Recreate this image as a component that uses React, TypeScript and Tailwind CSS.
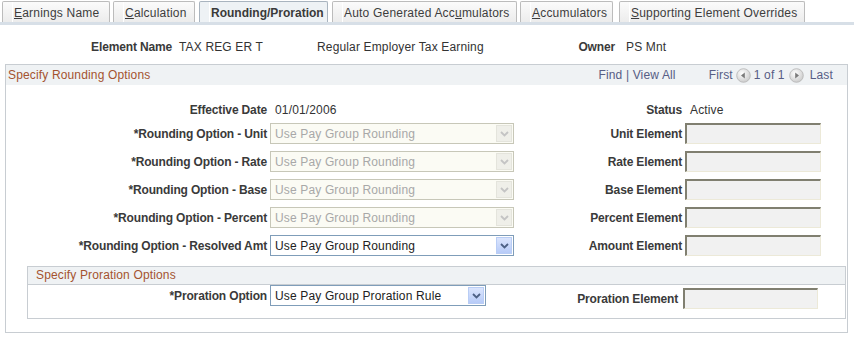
import React from "react";

const font = { fontFamily: '"Liberation Sans", Arial, sans-serif' };

type Tab = { label: string; hot?: number; width: number; gap: number; active?: boolean };

const tabs: Tab[] = [
  { label: "Earnings Name", hot: 0, width: 108, gap: 2 },
  { label: "Calculation", hot: 0, width: 82, gap: 3 },
  { label: "Rounding/Proration", width: 129, gap: 4, active: true },
  { label: "Auto Generated Accumulators", hot: 18, width: 185, gap: 4 },
  { label: "Accumulators", hot: 0, width: 93, gap: 3 },
  { label: "Supporting Element Overrides", hot: 0, width: 186, gap: 6 },
];

function TabLabel({ t }: { t: Tab }) {
  if (t.hot === undefined) return <>{t.label}</>;
  return (
    <>
      {t.label.slice(0, t.hot)}
      <span className="underline">{t.label[t.hot]}</span>
      {t.label.slice(t.hot + 1)}
    </>
  );
}

function Chevron({ color }: { color: string }) {
  return (
    <svg width="9" height="6" viewBox="0 0 9 6">
      <path d="M1 1 L4.5 4.5 L8 1" fill="none" stroke={color} strokeWidth="1.8" />
    </svg>
  );
}

function Select({ text, width, disabled }: { text: string; width: number; disabled?: boolean }) {
  if (disabled) {
    return (
      <div
        className="flex h-[21px] items-center border border-[#c7c7b8] bg-[#fbfbf4] pl-[4px] pr-[1px] tracking-[0.15px] text-[#a8a8a8]"
        style={{ width }}
      >
        <span className="flex-1 leading-none">{text}</span>
        <div className="flex h-[17px] w-[16px] items-center justify-center border border-[#e4e4dc] bg-[#efefe9]">
          <Chevron color="#c4c4c4" />
        </div>
      </div>
    );
  }
  return (
    <div
      className="flex h-[21px] items-center border border-[#7f9db9] bg-white pl-[4px] pr-[1px] tracking-[0.15px] text-[#222]"
      style={{ width }}
    >
      <span className="flex-1 leading-none">{text}</span>
      <div className="flex h-[17px] w-[16px] items-center justify-center border border-[#b9cdf5] bg-gradient-to-b from-[#dbe5fd] to-[#b7cbf8]">
        <Chevron color="#4d6185" />
      </div>
    </div>
  );
}

function Input({ width }: { width: number }) {
  return (
    <div
      className="h-[21px] border-t-2 border-l-2 border-r border-b border-t-[#807f70] border-l-[#807f70] border-r-[#ece9d8] border-b-[#ece9d8] bg-[#f1f1f1]"
      style={{ width }}
    />
  );
}

function NavIcon({ dir }: { dir: "left" | "right" }) {
  return (
    <svg width="15" height="15" viewBox="0 0 15 15">
      <defs>
        <radialGradient id={`g${dir}`} cx="40%" cy="35%" r="70%">
          <stop offset="0%" stopColor="#ffffff" />
          <stop offset="100%" stopColor="#c9c9c9" />
        </radialGradient>
      </defs>
      <circle cx="7.5" cy="7.5" r="6.8" fill={`url(#g${dir})`} stroke="#b4b4b4" strokeWidth="0.8" />
      {dir === "left" ? (
        <path d="M5 7.5 L8.8 4.6 L8.8 10.4 Z" fill="#7a7a7a" />
      ) : (
        <path d="M10 7.5 L6.2 4.6 L6.2 10.4 Z" fill="#7a7a7a" />
      )}
    </svg>
  );
}

const rows = [
  { label: "*Rounding Option - Unit", right: "Unit Element", disabled: true },
  { label: "*Rounding Option - Rate", right: "Rate Element", disabled: true },
  { label: "*Rounding Option - Base", right: "Base Element", disabled: true },
  { label: "*Rounding Option - Percent", right: "Percent Element", disabled: true },
  { label: "*Rounding Option - Resolved Amt", right: "Amount Element", disabled: false },
];

const lbl = "text-right font-bold tracking-[-0.15px] text-[#3a3a3a]";
const val = "tracking-[0.15px]";

export default function App() {
  return (
    <div className="h-[337px] w-[854px] overflow-hidden bg-white text-[12px] text-[#333]" style={font}>
      {/* tab strip */}
      <div className="flex h-[22px] items-end pt-[1px]">
        {tabs.map((t) => (
          <div
            key={t.label}
            className={
              "flex h-[21px] items-center rounded-t-[2px] border border-b-0 pl-[9px] " +
              (t.active
                ? "border-[#a9b4bf] bg-[#eef2f5] font-bold text-[#3a3a3a]"
                : "border-[#bcbcbc] bg-gradient-to-b from-[#fbfbfb] to-[#ececec] tracking-[0.2px] text-[#3d3d3d]")
            }
            style={{ width: t.width, marginLeft: t.gap }}
          >
            <div className="flex h-full w-full items-center border-l border-white pt-[2px]">
              <span className="pl-[1px] leading-none">
                <TabLabel t={t} />
              </span>
            </div>
          </div>
        ))}
      </div>
      <div className="h-[3px] w-full bg-[#d7dfe7]" />

      {/* element header */}
      <div className="mt-[14px] flex h-[16px] items-center">
        <div className={"w-[172px] " + lbl}>Element Name</div>
        <div className={"ml-[7px] w-[138px] " + val}>TAX REG ER T</div>
        <div className={"w-[233px] " + val}>Regular Employer Tax Earning</div>
        <div className={"w-[65px] " + lbl}>Owner</div>
        <div className={"ml-[11px] " + val}>PS Mnt</div>
      </div>

      {/* rounding group */}
      <div className="ml-[5px] mt-[9px] h-[269px] w-[843px] border border-[#c8cdd2]">
        <div className="flex h-[20px] items-center bg-[#eff2f4] pl-[2px] pr-[14px] tracking-[0.15px]">
          <span className="text-[#a4532f]">Specify Rounding Options</span>
          <div className="flex-1" />
          <span className="text-[#575d85]">Find | View All</span>
          <span className="ml-[33px] text-[#575d85]">First</span>
          <span className="ml-[3px] flex items-center">
            <NavIcon dir="left" />
          </span>
          <span className="ml-[3px] text-[#575d85]">1 of 1</span>
          <span className="ml-[4px] flex items-center">
            <NavIcon dir="right" />
          </span>
          <span className="ml-[6px] text-[#575d85]">Last</span>
        </div>

        <div className="mt-[15px] flex h-[20px] items-center">
          <div className={"w-[261px] " + lbl}>Effective Date</div>
          <div className={"ml-[8px] w-[244px] " + val}>01/01/2006</div>
          <div className={"w-[163px] " + lbl}>Status</div>
          <div className={"ml-[8px] " + val}>Active</div>
        </div>

        <div className="mt-[3px] flex flex-col gap-[7px]">
          {rows.map((r) => (
            <div key={r.label} className="flex h-[21px] items-center">
              <div className={"w-[261px] " + lbl}>{r.label}</div>
              <div className="ml-[3px]">
                <Select text="Use Pay Group Rounding" width={244} disabled={r.disabled} />
              </div>
              <div className={"w-[168px] " + lbl}>{r.right}</div>
              <div className="ml-[3px]">
                <Input width={136} />
              </div>
            </div>
          ))}
        </div>

        {/* proration group */}
        <div className="ml-[21px] mt-[10px] h-[53px] w-[819px] border border-[#c8cdd2]">
          <div className="flex h-[18px] items-center border-b border-[#c8cdd2] bg-[#eff2f4] pb-[2px] pl-[8px] tracking-[0.15px]">
            <span className="text-[#a4532f]">Specify Proration Options</span>
          </div>
          <div className="flex h-[21px] items-start">
            <div className={"w-[239px] pt-[2px] " + lbl}>*Proration Option</div>
            <div className="ml-[3px]">
              <Select text="Use Pay Group Proration Rule" width={216} />
            </div>
            <div className={"w-[192px] pt-[5px] " + lbl}>Proration Element</div>
            <div className="ml-[5px] pt-[3px]">
              <Input width={135} />
            </div>
          </div>
        </div>
      </div>
    </div>
  );
}
